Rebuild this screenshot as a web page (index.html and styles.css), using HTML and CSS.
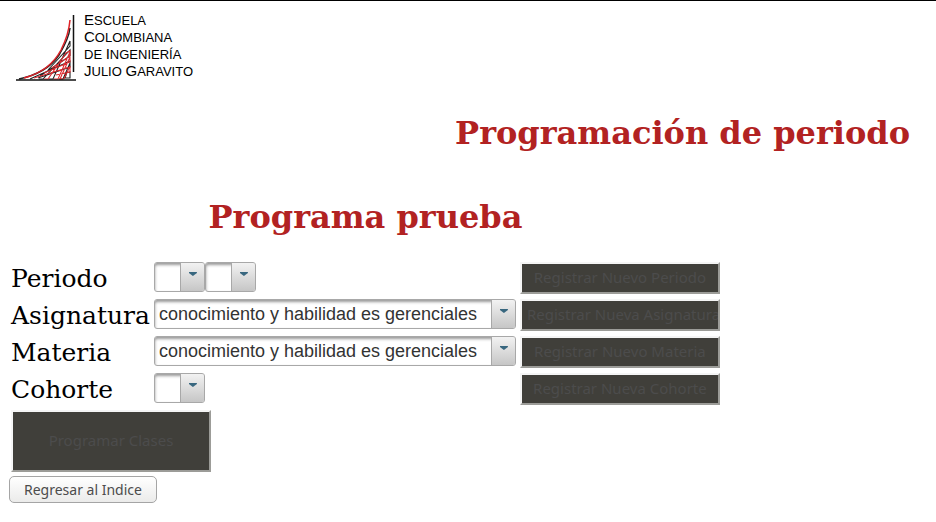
FILE: index.html
```html
<!DOCTYPE html>
<html lang="es">
<head>
<meta charset="utf-8">
<title>Programación de periodo</title>
<link rel="stylesheet" href="styles.css">
</head>
<body>
<header class="brand">
  <svg class="brand-mark" viewBox="0 0 62 70" width="62" height="70" aria-hidden="true">
    <g fill="none" stroke-width="1.100">
      <path stroke="#222222" d="M14 65 L54 47 V53 L22 64 M23 65 H27 L54 36 V42 L24 62 M33 65 H37 L54 27 V32 L32 56 M43 65 H47 L54 49 M49 59 L54 58 V64 H49 L51 58"/>
      <path stroke="#dd2a2f" d="M18 64 L54 53 V58 L40 61 M28 65 H32 L50 39 L54 37 V42 L36 54 M38 65 H42 L54 38 M54 43 V48 L28 59 M48 65 L54 52 M47 65 H44 L54 43"/>
      <path stroke="#222222" stroke-width="1.500" d="M3 65 C22 61 35 53 43 41 C49 31 53 23 54 14"/>
      <path stroke="#df2227" stroke-width="1.500" d="M8 64 C23 60 37 51 45 36 C50 26 53 18 54 6"/>
    </g>
    <path fill="none" stroke="#111111" stroke-width="1.500" d="M57.500 1 V58 M0 66 H60"/>
  </svg>
  <p class="brand-name">
    <span class="cap">E</span>SCUELA<br>
    <span class="cap">C</span>OLOMBIANA<br>
    DE <span class="cap">I</span>NGENIERÍA<br>
    <span class="cap">J</span>ULIO <span class="cap">G</span>ARAVITO
  </p>
</header>
<main>
  <h1 class="page-title">Programación de periodo</h1>
  <form class="program">
    <h1 class="program-title">Programa prueba</h1>
    <label for="year">Periodo</label>
    <div class="fields">
      <span class="picker short"><select id="year"><option></option></select></span>
      <span class="picker short"><select id="term" aria-label="Número de periodo"><option></option></select></span>
    </div>
    <button class="dark" type="button">Registrar Nuevo Periodo</button>

    <label for="subject">Asignatura</label>
    <div class="fields">
      <span class="picker long"><select id="subject"><option>conocimiento y habilidad es gerenciales</option></select></span>
    </div>
    <button class="dark" type="button">Registrar Nueva Asignatura</button>

    <label for="course">Materia</label>
    <div class="fields">
      <span class="picker long"><select id="course"><option>conocimiento y habilidad es gerenciales</option></select></span>
    </div>
    <button class="dark" type="button">Registrar Nuevo Materia</button>

    <label for="cohort">Cohorte</label>
    <div class="fields">
      <span class="picker short"><select id="cohort"><option></option></select></span>
    </div>
    <button class="dark" type="button">Registrar Nueva Cohorte</button>

    <button class="dark schedule" type="button">Programar Clases</button>
  </form>
  <button class="back" type="button">Regresar al Indice</button>
</main>
</body>
</html>
```
FILE: styles.css
```css
* {
  box-sizing: border-box;
}

body {
  margin: 0;
  border-top: 1px solid #000;
  padding: 0 8px;
  background: #fff;
  color: #000;
  font-family: "DejaVu Serif", serif;
}

.brand {
  display: flex;
  gap: 6px;
  padding: 13px 0 0 8px;
}

.brand-mark {
  flex: none;
}

.brand-name {
  margin: -2px 0 0;
  color: #000;
  font: 13px/16px "Liberation Sans", Arial, sans-serif;
}

.cap {
  font-size: 15px;
}

h1 {
  margin: 0;
  color: #b22222;
  font-size: 32px;
  line-height: 38px;
}

.page-title {
  padding: 30px 18px 0 0;
  text-align: right;
}

.program {
  display: grid;
  grid-template-columns: max-content 362px 200px;
  grid-auto-rows: minmax(33px, auto);
  gap: 4px;
  justify-content: start;
  padding: 46px 3px 0;
}

.program-title {
  grid-column: 1 / -1;
  padding-bottom: 22px;
  text-align: center;
}

.program label {
  font-size: 25px;
  line-height: 33px;
}

.fields {
  display: flex;
  align-items: flex-start;
}

.picker {
  position: relative;
  display: flex;
}

.short {
  width: 51px;
}

.long {
  width: 100%;
}

.picker select {
  width: 100%;
  height: 30px;
  margin: 0;
  border: 1px solid #a8a8a8;
  border-radius: 3px;
  padding: 0 24px 0 4px;
  appearance: none;
  background: #fff;
  box-shadow: inset 0 2px 3px #999;
  color: #333;
  font: 18px "Liberation Sans", Arial, sans-serif;
}

.picker::before {
  content: "";
  position: absolute;
  top: 1px;
  right: 1px;
  bottom: 1px;
  width: 23px;
  border-left: 1px solid #a8a8a8;
  border-radius: 0 2px 2px 0;
  background: linear-gradient(#f2f2f2, #c6c6c6);
  pointer-events: none;
}

.picker::after {
  content: "";
  position: absolute;
  top: 10px;
  right: 8px;
  width: 8px;
  height: 4px;
  background: #38677f;
  clip-path: polygon(0 0, 100% 0, 100% 25%, 50% 100%, 0 25%);
  pointer-events: none;
}

.dark {
  height: 32px;
  overflow: hidden;
  border: 2px solid;
  border-color: #f5f5f5 #9c9c98 #9c9c98 #f5f5f5;
  padding: 0 5px 2px;
  background: #403f3a;
  color: #4c4c4c;
  font: 15px "Noto Sans", sans-serif;
  white-space: nowrap;
}

.schedule {
  grid-column: 1 / -1;
  justify-self: start;
  width: 200px;
  height: 62px;
}

.back {
  display: block;
  height: 27px;
  margin: 4px 1px 0;
  border: 1px solid #a5a5a5;
  border-radius: 5px;
  padding: 0 14px;
  background: linear-gradient(#fff, #ebebea);
  color: #4c4c4c;
  font: 14px "Noto Sans", sans-serif;
}
```
